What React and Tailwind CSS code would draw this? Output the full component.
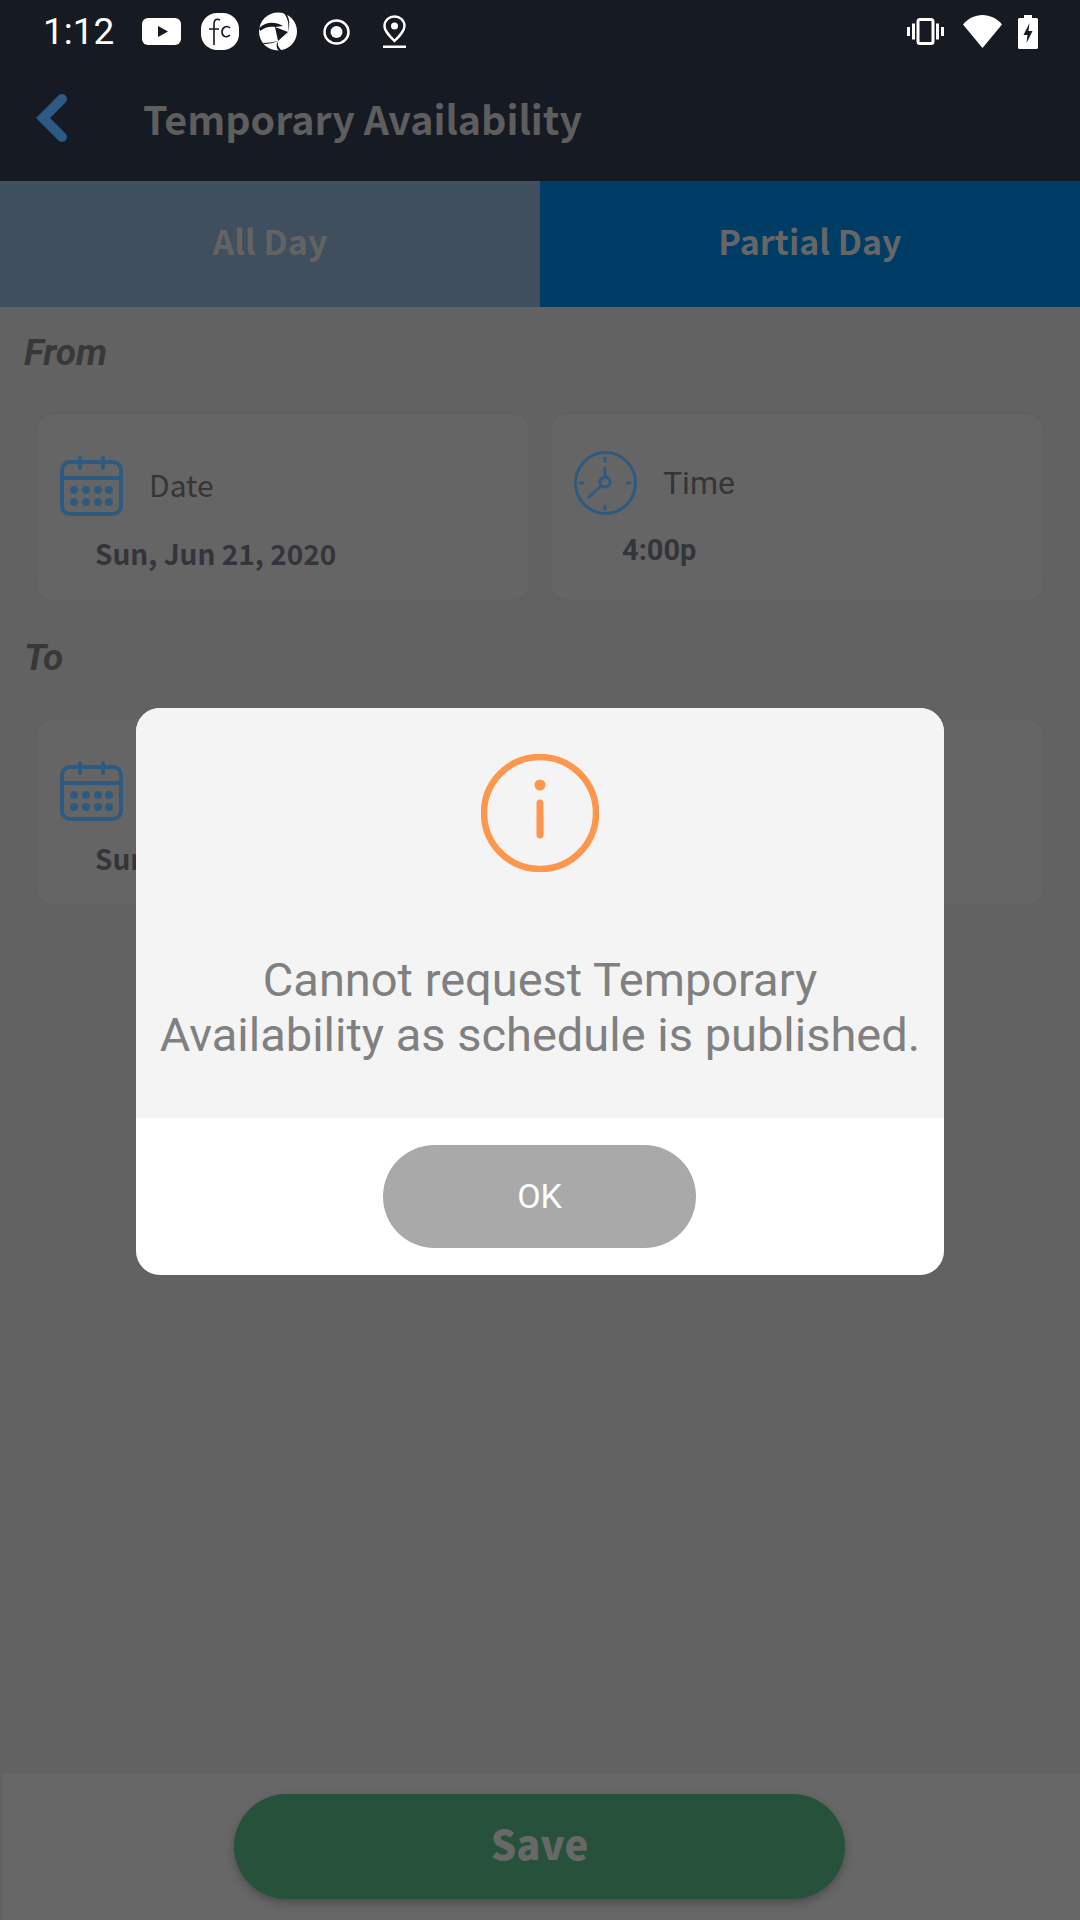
import React from 'react';

const cjk = 'font-["Noto_Sans_CJK_SC",sans-serif]';
const roboto = 'font-["Roboto",sans-serif]';

function Youtube() {
  return (
    <svg width="39" height="27" viewBox="0 0 39 27">
      <rect width="39" height="27" rx="6" fill="#fff" />
      <path d="M16 8v11l10-5.500z" fill="#161a22" />
    </svg>
  );
}

function FcLogo() {
  return (
    <svg width="38" height="37" viewBox="0 0 38 37" className="ml-[20px]">
      <rect width="38" height="37" rx="16" fill="#fff" />
      <path d="M19 7c-4-2-6 0-6 4v21M8 16h10" fill="none" stroke="#161a22" strokeWidth="1.600" />
      <path d="M29 15c-3-3-8-1-8 4s5 6 8 3" fill="none" stroke="#161a22" strokeWidth="1.600" />
    </svg>
  );
}

function ShutterLogo() {
  return (
    <svg width="38" height="39" viewBox="0 0 38 39" className="ml-[20px]">
      <circle cx="19" cy="19.500" r="19" fill="#fff" />
      <path d="M16 15l13 5-10 9z" fill="#161a22" />
      <path d="M0 16C7 10 15 9 24 14L16 15C11 14 6 15 1 19z" fill="#161a22" />
      <path d="M27 1c4 6 4 13 2 19 1-6 1-13-5-20z" fill="#161a22" />
      <path d="M19 29c-1 4 1 7 4 10l-3 0c-3-3-3-7-1-10zM19 29c-4 2-9 3-14 3l-1-1c5 0 10-1 15-2z" fill="#161a22" />
    </svg>
  );
}

function TargetIcon() {
  return (
    <svg width="27" height="26" viewBox="0 0 27 26" className="ml-[26px]">
      <ellipse cx="13.500" cy="13" rx="12" ry="11.500" fill="none" stroke="#fff" strokeWidth="2.500" />
      <circle cx="13.500" cy="13" r="6" fill="#fff" />
    </svg>
  );
}

function PinIcon() {
  return (
    <svg width="23" height="33" viewBox="0 0 23 33" className="ml-[33px]">
      <path d="M11.500 1.500c-5.500 0-10 4-10 9.500 0 5 5 10 10 15 5-5 10-10 10-15 0-5.500-4.500-9.500-10-9.500z" fill="none" stroke="#fff" strokeWidth="2.400" />
      <circle cx="11.500" cy="11" r="3.500" fill="#fff" />
      <rect x="0" y="30.500" width="23" height="2.500" fill="#fff" />
    </svg>
  );
}

function VibrateIcon() {
  return (
    <svg width="37" height="27" viewBox="0 0 37 27">
      <rect x="11" y="1.500" width="15" height="24" rx="2" fill="none" stroke="#fff" strokeWidth="3" />
      <path d="M1.500 9v9M6.500 5.500v16M30.500 5.500v16M35.500 9v9" fill="none" stroke="#fff" strokeWidth="3" />
    </svg>
  );
}

function WifiIcon() {
  return (
    <svg width="39" height="33" viewBox="0 0 39 33" className="ml-[19px]">
      <path d="M0 9.500C5 3.500 12 0 19.500 0S34 3.500 39 9.500L19.500 33z" fill="#fff" />
    </svg>
  );
}

function BatteryIcon() {
  return (
    <svg width="20" height="34" viewBox="0 0 20 34" className="ml-[16px]">
      <path d="M6 0h8v3h4.500c.8 0 1.500.7 1.500 1.500v28c0 .8-.7 1.500-1.500 1.500h-17C.7 34 0 33.300 0 32.500v-28C0 3.700.7 3 1.500 3H6z" fill="#fff" />
      <path d="M11.500 8L5.500 20h4l-1 8 6-12h-4z" fill="#161a22" />
    </svg>
  );
}

function CalendarIcon() {
  return (
    <svg width="63" height="60" viewBox="0 0 63 60" className="shrink-0">
      <rect x="2" y="6" width="59" height="52" rx="8" fill="none" stroke="#2f5a80" strokeWidth="4" />
      <path d="M2 22h59M20 2v10M43 2v10" fill="none" stroke="#2f5a80" strokeWidth="4" strokeLinecap="round" />
      {[14, 26, 38, 49].map((x) => (
        <g key={x} fill="#2f5a80">
          <circle cx={x} cy="34" r="4" />
          <circle cx={x} cy="46" r="4" />
        </g>
      ))}
    </svg>
  );
}

function ClockIcon() {
  return (
    <svg width="63" height="64" viewBox="0 0 63 64" className="shrink-0">
      <g fill="none" stroke="#2f5a80" strokeWidth="3" strokeLinecap="round">
        <ellipse cx="31.500" cy="32" rx="30" ry="30.500" />
        <circle cx="31" cy="31" r="5" />
        <path d="M31 7v3M31 55v3M6 32h3M53 32h3M31 17v9M27 35L15 46" />
      </g>
    </svg>
  );
}

function InfoIcon() {
  return (
    <svg width="118" height="118" viewBox="0 0 118 118">
      <circle cx="59" cy="59" r="56" fill="none" stroke="#fe964e" strokeWidth="6.500" />
      <circle cx="59" cy="31" r="5.500" fill="#fe964e" />
      <path d="M59 49v32" fill="none" stroke="#fe964e" strokeWidth="7" strokeLinecap="round" />
    </svg>
  );
}

function PickerCard({ icon, label, value, labelClass, valueClass, rowClass }) {
  return (
    <div className="flex h-[188px] w-[494px] flex-col rounded-[18px] border border-[#5f5f5f] bg-[#656565] pl-[23px]">
      <div className={`flex items-center ${rowClass}`}>
        {icon}
        <span className={`leading-[40px] text-[#353535] ${labelClass}`}>{label}</span>
      </div>
      <div className={`text-[#33353b] ${valueClass}`}>{value}</div>
    </div>
  );
}

function DateTimeRow() {
  return (
    <div className="flex gap-[20px] pl-[36px]">
      <PickerCard
        icon={<CalendarIcon />}
        label="Date"
        value="Sun, Jun 21, 2020"
        rowClass="mt-[42px] gap-[26px]"
        labelClass={`pb-[4px] text-[30px] ${cjk}`}
        valueClass={`ml-[35px] mt-[17px] text-[28px] leading-[40px] font-semibold ${cjk}`}
      />
      <PickerCard
        icon={<ClockIcon />}
        label="Time"
        value="4:00p"
        rowClass="mt-[37px] gap-[26px]"
        labelClass={`text-[32px] ${roboto}`}
        valueClass={`ml-[48px] mt-[15px] text-[29px] leading-[40px] font-bold ${roboto}`}
      />
    </div>
  );
}

export default function App() {
  return (
    <div className="relative flex h-[1920px] w-[1080px] flex-col overflow-hidden bg-[#626262]">
      <header className="h-[181px] bg-[#161a22]">
        <div className="flex h-[63px] items-center pl-[43px] pr-[42px]">
          <span className={`w-[99px] text-[37px] leading-none text-white ${roboto}`}>1:12</span>
          <Youtube />
          <FcLogo />
          <ShutterLogo />
          <TargetIcon />
          <PinIcon />
          <div className="ml-auto flex items-center">
            <VibrateIcon />
            <WifiIcon />
            <BatteryIcon />
          </div>
        </div>
        <div className="flex h-[118px] items-center pb-[8px] pl-[36px]">
          <svg width="32" height="48" viewBox="0 0 32 48">
            <path d="M26 5L7 24l19 19" fill="none" stroke="#2c5a84" strokeWidth="10" strokeLinejoin="miter" strokeLinecap="round" />
          </svg>
          <h1 className={`ml-[75px] text-[39.400px] leading-none font-semibold text-[#5e5e5e] ${cjk}`}>Temporary Availability</h1>
        </div>
      </header>

      <div className={`flex h-[126px] text-[34px] font-bold ${cjk}`}>
        <div className="flex w-[540px] items-center justify-center bg-[#3f4f5e] pb-[7px] text-[#636363]">All Day</div>
        <div className="flex w-[540px] items-center justify-center bg-[#003d66] pb-[7px] text-[#666666]">Partial Day</div>
      </div>

      <h2 className={`ml-[24px] mt-[23px] text-[37px] leading-[46px] font-bold italic text-[#383838] ${roboto}`}>From</h2>
      <div className="mt-[37px]">
        <DateTimeRow />
      </div>
      <h2 className={`ml-[24px] mt-[34px] text-[37px] leading-[46px] font-bold italic text-[#383838] ${roboto}`}>To</h2>
      <div className="mt-[37px]">
        <DateTimeRow />
      </div>

      <div className="ml-[3px] mt-auto flex h-[147px] justify-center border-t border-[#626262] bg-[#676767] pr-[4px] pt-[20px]">
        <button className={`h-[105px] w-[611px] rounded-full bg-[#26523b] pb-[7px] text-[40px] font-black text-[#686868] shadow-[0_4px_8px_rgba(0,0,0,0.25)] ${cjk}`}>Save</button>
      </div>

      <div className="absolute left-[136px] top-[708px] w-[808px] overflow-hidden rounded-[24px] bg-white">
        <div className="flex h-[410px] flex-col items-center bg-[#f4f4f4] pt-[46px]">
          <InfoIcon />
          <p className={`mt-[80px] whitespace-nowrap text-center text-[47px] leading-[55px] text-[#808080] ${roboto}`}>
            Cannot request Temporary
            <br />
            Availability as schedule is published.
          </p>
        </div>
        <div className="flex h-[157px] justify-center pr-[1px] pt-[27px]">
          <button className={`h-[103px] w-[313px] rounded-full bg-[#a9a9a9] text-[34px] text-white ${roboto}`}>OK</button>
        </div>
      </div>
    </div>
  );
}
